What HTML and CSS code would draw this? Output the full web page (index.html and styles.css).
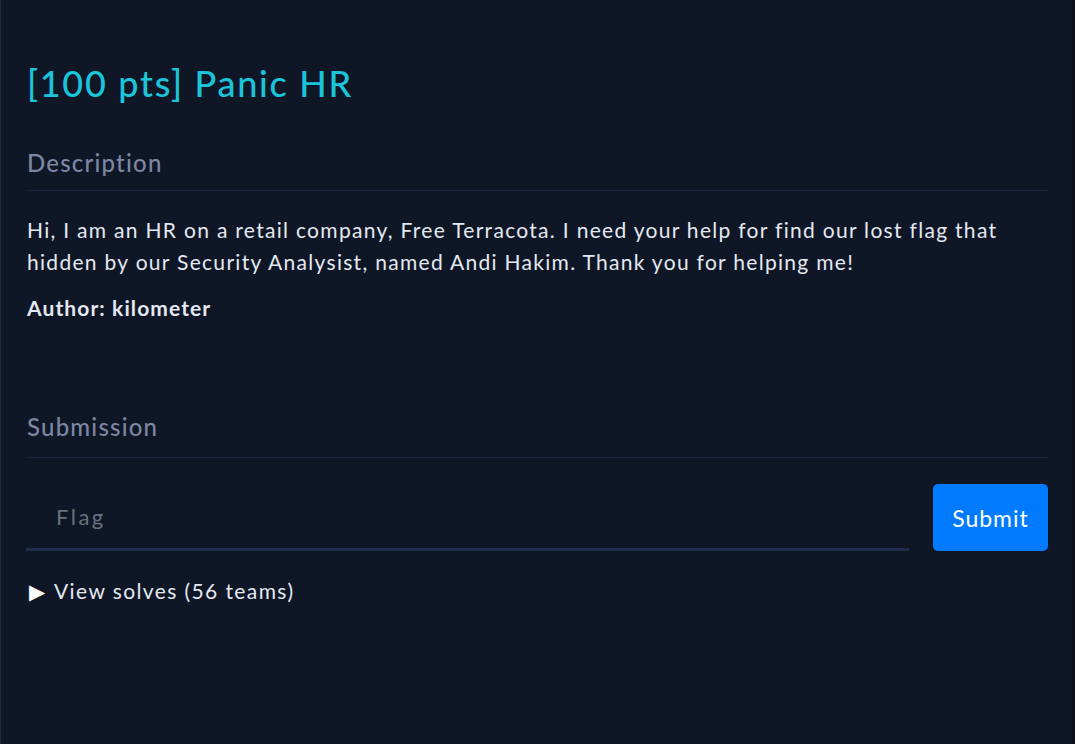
FILE: index.html
```html
<!DOCTYPE html>
<html>
<head>
<meta charset="utf-8">
<link rel="stylesheet" href="styles.css">
</head>
<body>
<div class="modal">
  <div class="content">
    <h1 class="title">[100 pts] Panic HR</h1>
    <h2 class="section">Description</h2>
    <p class="desc">Hi, I am an HR on a retail company, Free Terracota. I need your help for find our lost flag that hidden by our Security Analysist, named Andi Hakim. Thank you for helping me!</p>
    <p class="author">Author: kilometer</p>
    <h2 class="section sub">Submission</h2>
    <form class="submit-row">
      <input class="flag" type="text" placeholder="Flag">
      <button class="btn" type="button">Submit</button>
    </form>
    <details class="solves"><summary>View solves (56 teams)</summary></details>
  </div>
</div>
</body>
</html>
```
FILE: styles.css
```css
html, body {
  margin: 0;
  height: 100%;
  background: #0a0f1a;
}
body {
  font-family: "Lato", "Open Sans", sans-serif;
}
.modal {
  height: 744px;
  width: 1072px;
  box-sizing: border-box;
  background: #0f1727;
  border-left: 1px solid #1f2638;
}
.content {
  padding: 55px 24px 0 26px;
}
.title {
  margin: 0;
  font-size: 36px;
  font-weight: 500;
  letter-spacing: 1.7px;
  color: #1cc4da;
  line-height: 56px;
}
.section {
  margin: 37px 0 0 0;
  font-size: 24px;
  font-weight: 500;
  letter-spacing: 1.2px;
  color: #7d86a3;
  line-height: 30px;
  padding-bottom: 12px;
  border-bottom: 1px solid #1b2440;
}
.desc {
  margin: 23px 0 0 0;
  font-size: 21px;
  letter-spacing: 1.3px;
  line-height: 32px;
  color: #e4e9f1;
}
.author {
  margin: 15px 0 0 0;
  font-size: 21px;
  font-weight: 700;
  letter-spacing: 1.1px;
  color: #e4e9f1;
  line-height: 30px;
}
.sub {
  margin-top: 89px;
  padding-bottom: 15px;
}
.submit-row {
  display: flex;
  align-items: flex-end;
  gap: 24px;
  margin-top: 26px;
}
.flag {
  flex: 1;
  background: transparent;
  border: none;
  border-bottom: 3px solid #1e2d4b;
  height: 66px;
  box-sizing: border-box;
  padding: 0 0 0 30px;
  margin-left: -1px;
  font-family: inherit;
  font-size: 22px;
  letter-spacing: 2.5px;
  color: #e4e9f1;
  outline: none;
}
.flag::placeholder {
  color: #6c717c;
}
.btn {
  width: 115px;
  height: 67px;
  background: #007bff;
  color: #fff;
  border: none;
  border-radius: 5px;
  font-family: inherit;
  font-size: 23px;
  letter-spacing: 1px;
  padding: 0;
}
.solves {
  margin-top: 25px;
  font-size: 21px;
  letter-spacing: 1.4px;
  color: #e4e9f1;
  line-height: 30px;
}
.solves summary {
  list-style: none;
  cursor: pointer;
}
.solves summary::-webkit-details-marker { display: none; }
.solves summary::before {
  content: "\25B6";
  font-size: 21px;
  color: #ffffff;
  margin-right: 9px;
  margin-left: 2px;
  letter-spacing: 0;
}
```
